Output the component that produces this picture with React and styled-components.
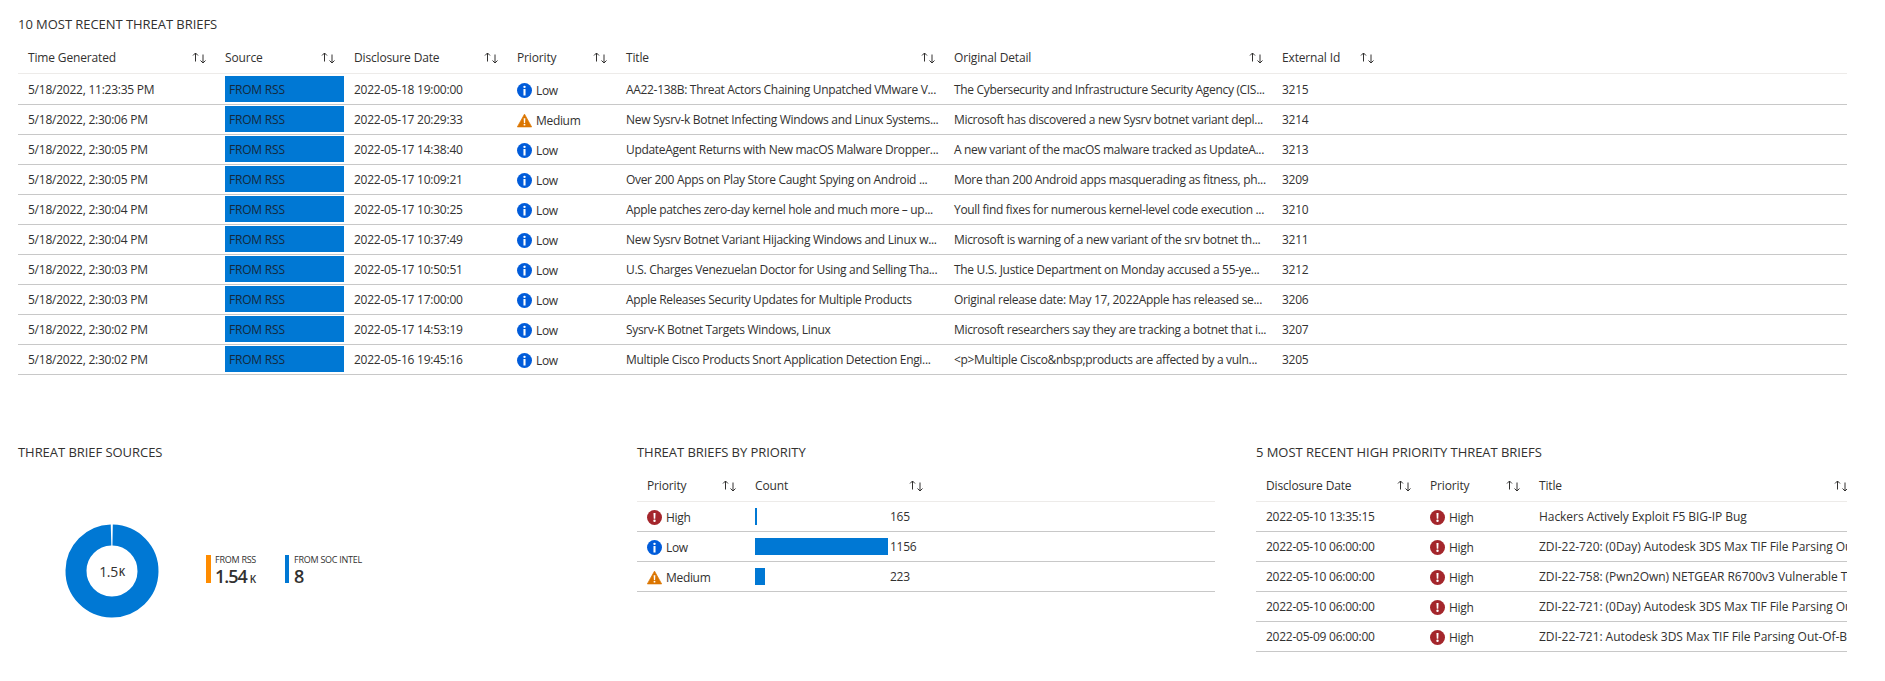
import React from 'react';
import styled, { createGlobalStyle } from 'styled-components';

const recentBriefs = [
	['5/18/2022, 11:23:35 PM', '2022-05-18 19:00:00', 'Low', 'AA22-138B: Threat Actors Chaining Unpatched VMware V...', 'The Cybersecurity and Infrastructure Security Agency (CIS...', '3215'],
	['5/18/2022, 2:30:06 PM', '2022-05-17 20:29:33', 'Medium', 'New Sysrv-k Botnet Infecting Windows and Linux Systems...', 'Microsoft has discovered a new Sysrv botnet variant depl...', '3214'],
	['5/18/2022, 2:30:05 PM', '2022-05-17 14:38:40', 'Low', 'UpdateAgent Returns with New macOS Malware Dropper...', 'A new variant of the macOS malware tracked as UpdateA...', '3213'],
	['5/18/2022, 2:30:05 PM', '2022-05-17 10:09:21', 'Low', 'Over 200 Apps on Play Store Caught Spying on Android ...', 'More than 200 Android apps masquerading as fitness, ph...', '3209'],
	['5/18/2022, 2:30:04 PM', '2022-05-17 10:30:25', 'Low', 'Apple patches zero-day kernel hole and much more – up...', 'Youll find fixes for numerous kernel-level code execution ...', '3210'],
	['5/18/2022, 2:30:04 PM', '2022-05-17 10:37:49', 'Low', 'New Sysrv Botnet Variant Hijacking Windows and Linux w...', 'Microsoft is warning of a new variant of the srv botnet th...', '3211'],
	['5/18/2022, 2:30:03 PM', '2022-05-17 10:50:51', 'Low', 'U.S. Charges Venezuelan Doctor for Using and Selling Tha...', 'The U.S. Justice Department on Monday accused a 55-ye...', '3212'],
	['5/18/2022, 2:30:03 PM', '2022-05-17 17:00:00', 'Low', 'Apple Releases Security Updates for Multiple Products', 'Original release date: May 17, 2022Apple has released se...', '3206'],
	['5/18/2022, 2:30:02 PM', '2022-05-17 14:53:19', 'Low', 'Sysrv-K Botnet Targets Windows, Linux', 'Microsoft researchers say they are tracking a botnet that i...', '3207'],
	['5/18/2022, 2:30:02 PM', '2022-05-16 19:45:16', 'Low', 'Multiple Cisco Products Snort Application Detection Engi...', '<p>Multiple Cisco&nbsp;products are affected by a vuln...', '3205'],
];

const priorityCounts = [
	['High', 165],
	['Low', 1156],
	['Medium', 223],
];

const highBriefs = [
	['2022-05-10 13:35:15', 'Hackers Actively Exploit F5 BIG-IP Bug'],
	['2022-05-10 06:00:00', 'ZDI-22-720: (0Day) Autodesk 3DS Max TIF File Parsing Out-Of-Bounds'],
	['2022-05-10 06:00:00', 'ZDI-22-758: (Pwn2Own) NETGEAR R6700v3 Vulnerable Through'],
	['2022-05-10 06:00:00', 'ZDI-22-721: (0Day) Autodesk 3DS Max TIF File Parsing Out-Of-Bounds'],
	['2022-05-09 06:00:00', 'ZDI-22-721: Autodesk 3DS Max TIF File Parsing Out-Of-B...'],
];

const MAIN_COLS = '197px 129px 163px 109px 328px 328px 111px 1fr';
const PRIORITY_COLS = '108px 187px 1fr';
const HIGH_COLS = '164px 109px 328px';

const SortIcon = () => (
	<SortSvg viewBox="0 0 15 12">
		<path d="M3.5 9.5V1M1 3.5 3.5 1 6 3.5M11 2.5V11M8.5 8.5 11 11l2.5-2.5" />
	</SortSvg>
);

const PriorityIcon = ({ level }) => {
	if (level === 'Medium') {
		return (
			<IconSvg viewBox="0 0 16 16">
				<path d="M8 1.2 15.6 14.8H.4z" fill="#db7500" stroke="#db7500" strokeWidth="0.8" strokeLinejoin="round" />
				<path d="M7.1 5.6h1.8l-.25 5h-1.3zM8 11.4a1 1 0 1 1 0 2 1 1 0 0 1 0-2z" fill="#fff" />
			</IconSvg>
		);
	}
	if (level === 'High') {
		return (
			<IconSvg viewBox="0 0 16 16">
				<circle cx="8" cy="8" r="8" fill="#a4262c" />
				<path d="M6.9 3.2h2.2l-.3 6h-1.6zM8 10.2a1.3 1.3 0 1 1 0 2.6 1.3 1.3 0 0 1 0-2.6z" fill="#fff" />
			</IconSvg>
		);
	}
	return (
		<IconSvg viewBox="0 0 16 16">
			<circle cx="8" cy="8" r="8" fill="#015cda" />
			<path d="M8 2.8a1.3 1.3 0 1 1 0 2.6 1.3 1.3 0 0 1 0-2.6zM6.9 6.4h2.2v6.8H6.9z" fill="#fff" />
		</IconSvg>
	);
};

const Priority = ({ level }) => (
	<PriorityWrap>
		<PriorityIcon level={level} />
		<PriorityText>{level}</PriorityText>
	</PriorityWrap>
);

const Head = ({ cols, labels }) => (
	<HeadRow $cols={cols}>
		{labels.map((label) => (
			<HeadCell key={label}>
				<span>{label}</span>
				<SortIcon />
			</HeadCell>
		))}
	</HeadRow>
);

const App = () => {
	return (
		<Page>
			<GlobalStyle />
			<section>
				<PanelTitle>10 MOST RECENT THREAT BRIEFS</PanelTitle>
				<Head
					cols={MAIN_COLS}
					labels={['Time Generated', 'Source', 'Disclosure Date', 'Priority', 'Title', 'Original Detail', 'External Id']}
				/>
				<MainBody>
					{recentBriefs.map((row) => (
						<Row $cols={MAIN_COLS} key={row[5]}>
							<NumCell>{row[0]}</NumCell>
							<SourceCell>
								<SourceFill>FROM RSS</SourceFill>
							</SourceCell>
							<NumCell>{row[1]}</NumCell>
							<Cell>
								<Priority level={row[2]} />
							</Cell>
							<Cell>{row[3]}</Cell>
							<Cell>{row[4]}</Cell>
							<NumCell>{row[5]}</NumCell>
						</Row>
					))}
				</MainBody>
			</section>
			<BottomRow>
				<section>
					<PanelTitle>THREAT BRIEF SOURCES</PanelTitle>
					<Chart>
						<Donut>
							<svg width="94" height="94" viewBox="0 0 94 94">
								<circle
									cx="47"
									cy="47"
									r="36"
									fill="none"
									stroke="#0078d4"
									strokeWidth="21"
									strokeDasharray="224.2 2"
									transform="rotate(-89 47 47)"
								/>
							</svg>
							<DonutLabel>
								1.5<small>K</small>
							</DonutLabel>
						</Donut>
						<Legend>
							<LegendItem $width={79} $gap={4}>
								<LegendBar $color="#ff8c00" $size={5} />
								<div>
									<LegendName>FROM RSS</LegendName>
									<LegendValue>
										1.54<small>K</small>
									</LegendValue>
								</div>
							</LegendItem>
							<LegendItem $gap={5}>
								<LegendBar $color="#0078d4" $size={4} />
								<div>
									<LegendName>FROM SOC INTEL</LegendName>
									<LegendValue>8</LegendValue>
								</div>
							</LegendItem>
						</Legend>
					</Chart>
				</section>
				<NarrowPanel>
					<PanelTitle>THREAT BRIEFS BY PRIORITY</PanelTitle>
					<Head cols={PRIORITY_COLS} labels={['Priority', 'Count']} />
					{priorityCounts.map(([level, count]) => (
						<Row $cols={PRIORITY_COLS} key={level}>
							<Cell>
								<Priority level={level} />
							</Cell>
							<BarCell>
								<BarTrack>
									<BarFill style={{ width: 2 + (count - 165) * 0.1322 }} />
								</BarTrack>
								{count}
							</BarCell>
						</Row>
					))}
				</NarrowPanel>
				<ClippedPanel>
					<PanelTitle>5 MOST RECENT HIGH PRIORITY THREAT BRIEFS</PanelTitle>
					<Head cols={HIGH_COLS} labels={['Disclosure Date', 'Priority', 'Title']} />
					{highBriefs.map((row) => (
						<Row $cols={HIGH_COLS} key={row[1]}>
							<NumCell>{row[0]}</NumCell>
							<Cell>
								<Priority level="High" />
							</Cell>
							<WideCell>{row[1]}</WideCell>
						</Row>
					))}
				</ClippedPanel>
			</BottomRow>
		</Page>
	);
};

const GlobalStyle = createGlobalStyle`
	html, body {
		margin: 0;
		background: #fff;
		color: #323130;
		font-family: "Open Sans", "Noto Sans", sans-serif;
		font-size: 12px;
	}
	* {
		box-sizing: border-box;
	}
`;

const Page = styled.div`
	width: 1885px;
	height: 681px;
	overflow: hidden;
	padding: 14px 38px 0 18px;
`;

const PanelTitle = styled.h2`
	margin: 0 0 7px;
	height: 20px;
	font-size: 13px;
	line-height: 20px;
	font-weight: 400;
	letter-spacing: -0.05px;
	white-space: nowrap;
`;

const HeadRow = styled.div`
	display: grid;
	grid-template-columns: ${(props) => props.$cols};
	height: 33px;
	border-bottom: 1px solid #edebe9;
`;

const HeadCell = styled.div`
	display: flex;
	align-items: center;
	justify-content: space-between;
	padding: 1px 8px 0 10px;
	font-weight: 500;
	letter-spacing: -0.15px;
	white-space: nowrap;
`;

const SortSvg = styled.svg`
	width: 15px;
	height: 12px;
	flex: none;
	fill: none;
	stroke: #323130;
	stroke-width: 1;
`;

const MainBody = styled.div`
	margin-top: 1px;
`;

const Row = styled.div`
	display: grid;
	grid-template-columns: ${(props) => props.$cols};
	height: 30px;
	border-bottom: 1px solid #c8c8c8;
`;

const Cell = styled.div`
	display: flex;
	align-items: center;
	padding: 0 0 0 10px;
	overflow: hidden;
	white-space: nowrap;
	letter-spacing: -0.32px;
`;

const NumCell = styled(Cell)`
	letter-spacing: -0.24px;
`;

const WideCell = styled(Cell)`
	letter-spacing: -0.05px;
`;

const SourceCell = styled.div`
	padding: 1px 0 0 10px;
`;

const SourceFill = styled.div`
	display: flex;
	align-items: center;
	height: 26px;
	padding-left: 4px;
	background: #0078d4;
	color: #14293d;
	letter-spacing: -0.2px;
`;

const PriorityWrap = styled.div`
	display: flex;
	align-items: center;
	gap: 4px;
`;

const IconSvg = styled.svg`
	width: 15px;
	height: 15px;
	flex: none;
	margin-top: 1px;
`;

const PriorityText = styled.span`
	padding-top: 2px;
`;

const BottomRow = styled.div`
	display: grid;
	grid-template-columns: 619px 619px 1fr;
	margin-top: 67px;
`;

const NarrowPanel = styled.section`
	width: 578px;
`;

const ClippedPanel = styled.section`
	overflow: hidden;
`;

const Chart = styled.div`
	display: flex;
	align-items: flex-start;
	gap: 47px;
	margin-top: 62px;
	padding-left: 47px;
`;

const Donut = styled.div`
	position: relative;
	width: 94px;
	height: 94px;
	svg {
		display: block;
	}
`;

const DonutLabel = styled.div`
	position: absolute;
	inset: 0;
	display: flex;
	align-items: center;
	justify-content: center;
	font-size: 14px;
	font-weight: 500;
	letter-spacing: -0.4px;
	small {
		font-size: 10px;
		font-weight: 600;
		margin: 2px 0 0 1px;
	}
`;

const Legend = styled.div`
	display: flex;
	padding-top: 31px;
`;

const LegendItem = styled.div`
	display: flex;
	gap: ${(props) => props.$gap}px;
	width: ${(props) => (props.$width ? `${props.$width}px` : 'auto')};
`;

const LegendBar = styled.div`
	width: ${(props) => props.$size}px;
	height: 28px;
	background: ${(props) => props.$color};
`;

const LegendName = styled.div`
	font-size: 9px;
	line-height: 12px;
	letter-spacing: -0.25px;
	margin-top: -1px;
	white-space: nowrap;
`;

const LegendValue = styled.div`
	font-size: 18px;
	line-height: 20px;
	font-weight: 600;
	letter-spacing: -1px;
	small {
		font-size: 10px;
		font-weight: 600;
		letter-spacing: 0;
		margin-left: 3px;
	}
`;

const BarCell = styled(Cell)`
	gap: 2px;
	letter-spacing: -0.24px;
`;

const BarTrack = styled.div`
	width: 133px;
`;

const BarFill = styled.div`
	height: 17px;
	background: #0078d4;
`;

export default App;
